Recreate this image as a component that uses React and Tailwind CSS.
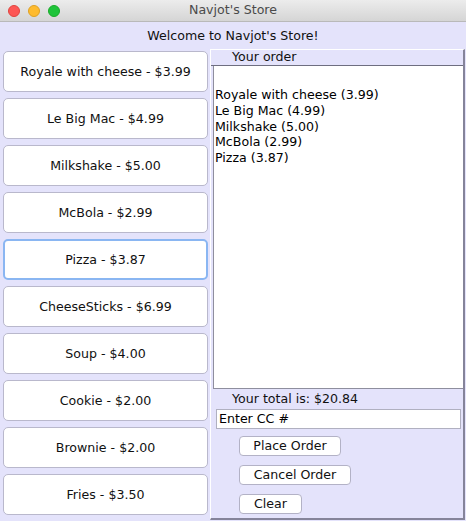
import React from "react";

const items = [
  ["Royale with cheese", "3.99"],
  ["Le Big Mac", "4.99"],
  ["Milkshake", "5.00"],
  ["McBola", "2.99"],
  ["Pizza", "3.87"],
  ["CheeseSticks", "6.99"],
  ["Soup", "4.00"],
  ["Cookie", "2.00"],
  ["Brownie", "2.00"],
  ["Fries", "3.50"],
];

const order = [
  "Royale with cheese (3.99)",
  "Le Big Mac (4.99)",
  "Milkshake (5.00)",
  "McBola (2.99)",
  "Pizza (3.87)",
];

export default function App() {
  return (
    <div
      className="w-[466px] h-[521px] bg-[#e4e3fb] flex flex-col overflow-hidden text-[12.6px] text-[#111]"
      style={{ fontFamily: '"DejaVu Sans", "Liberation Sans", sans-serif' }}
    >
      {/* Title bar */}
      <div className="h-[22px] flex items-center relative bg-gradient-to-b from-[#ececec] to-[#d5d5d5] border-b border-[#b9b9b9]">
        <div className="flex items-center gap-[8px] pl-[8px]">
          <span className="w-[12px] h-[12px] rounded-full bg-[#fd5754] border border-[#e0443e]" />
          <span className="w-[12px] h-[12px] rounded-full bg-[#febb2e] border border-[#dea123]" />
          <span className="w-[12px] h-[12px] rounded-full bg-[#1fc43a] border border-[#1aab29]" />
        </div>
        <div className="absolute inset-0 flex items-center justify-center text-[#4a4a4a] text-[12.6px]">
          Navjot's Store
        </div>
      </div>

      {/* Welcome */}
      <div className="h-[27px] flex items-center justify-center pt-[1px]">
        Welcome to Navjot's Store!
      </div>

      <div className="flex flex-1">
        {/* Menu */}
        <div className="w-[210px] pl-[3px] pt-[2px] flex flex-col gap-[6px]">
          {items.map(([name, price]) => (
            <button
              key={name}
              className={
                name === "Pizza"
                  ? "w-[205px] h-[41px] bg-white rounded-[5px] border-2 border-[#8ab6f2] flex items-center justify-center pt-[1px]"
                  : "w-[205px] h-[41px] bg-white rounded-[5px] border border-[#b9b8cc] flex items-center justify-center pt-[1px]"
              }
            >
              {name} - ${price}
            </button>
          ))}
        </div>

        {/* Order panel */}
        <div className="w-[255px] h-[471px] border-t border-l border-white border-r-2 border-b-2 border-r-[#85849a] border-b-[#85849a] flex flex-col">
          <div className="h-[16px] flex items-center pl-[21px] border-b border-[#6e6e80]">
            Your order
          </div>
          <div className="h-[323px] ml-[2px] bg-white border-l border-b border-[#8e8e9e] pl-[1px] pt-[21px] leading-[15.75px] text-black">
            {order.map((line) => (
              <div key={line}>{line}</div>
            ))}
          </div>
          <div className="h-[20px] flex items-center pl-[21px] pt-[1px]">
            Your total is: $20.84
          </div>
          <div className="ml-[5px] w-[245px] h-[20px] bg-white border border-[#b0b0c0] flex items-center pl-[2px] text-black">
            Enter CC #
          </div>
          <div className="flex flex-col items-start gap-[9px] pl-[28px] pt-[7px]">
            <button className="w-[102px] h-[20px] bg-white rounded-[4px] border border-[#b3b2c6] flex items-center justify-center">
              Place Order
            </button>
            <button className="w-[112px] h-[20px] bg-white rounded-[4px] border border-[#b3b2c6] flex items-center justify-center">
              Cancel Order
            </button>
            <button className="w-[63px] h-[20px] bg-white rounded-[4px] border border-[#b3b2c6] flex items-center justify-center">
              Clear
            </button>
          </div>
        </div>
      </div>
    </div>
  );
}
